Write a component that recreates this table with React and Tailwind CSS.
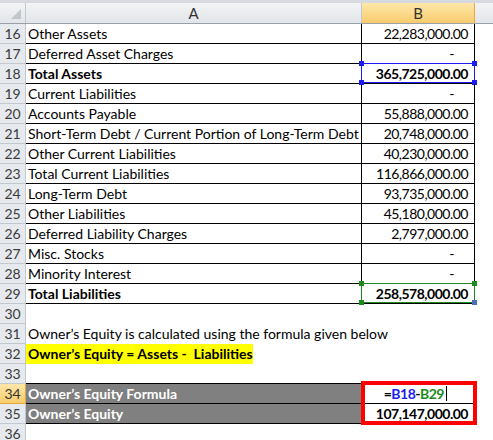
const rows = [
  { n: 16, a: "Other Assets", b: "22,283,000.00", grid: true },
  { n: 17, a: "Deferred Asset Charges", b: "-", grid: true },
  { n: 18, a: "Total Assets", b: "365,725,000.00", grid: true, bold: true, ref: "blue" },
  { n: 19, a: "Current Liabilities", b: "-", grid: true },
  { n: 20, a: "Accounts Payable", b: "55,888,000.00", grid: true },
  { n: 21, a: "Short-Term Debt / Current Portion of Long-Term Debt", b: "20,748,000.00", grid: true },
  { n: 22, a: "Other Current Liabilities", b: "40,230,000.00", grid: true },
  { n: 23, a: "Total Current Liabilities", b: "116,866,000.00", grid: true },
  { n: 24, a: "Long-Term Debt", b: "93,735,000.00", grid: true },
  { n: 25, a: "Other Liabilities", b: "45,180,000.00", grid: true },
  { n: 26, a: "Deferred Liability Charges", b: "2,797,000.00", grid: true },
  { n: 27, a: "Misc. Stocks", b: "-", grid: true },
  { n: 28, a: "Minority Interest", b: "-", grid: true },
  { n: 29, a: "Total Liabilities", b: "258,578,000.00", grid: true, bold: true, ref: "green" },
  { n: 30 },
  { n: 31, a: "Owner’s Equity is calculated using the formula given below" },
  { n: 32, a: "Owner’s Equity = Assets -  Liabilities", bold: true, yellow: true },
  { n: 33, bottom: true },
  { n: 34, a: "Owner’s Equity Formula", dark: true, bold: true, formula: true },
  { n: 35, a: "Owner’s Equity", b: "107,147,000.00", dark: true, bold: true },
  { n: 36 },
];

function RefBox({ color }) {
  const line = color === "blue" ? "border-[#1c1cf0]" : "border-[#1d8a1d]";
  const dot = color === "blue" ? "bg-[#1c1cf0]" : "bg-[#1d8a1d]";
  return (
    <div className={`absolute left-[-1px] top-[-1px] w-[114px] h-[20px] border ${line}`}>
      <span className={`absolute -left-[3px] -top-[3px] w-[5px] h-[5px] ${dot}`} />
      <span className={`absolute -right-[3px] -top-[3px] w-[5px] h-[5px] ${dot}`} />
      <span className={`absolute -left-[3px] -bottom-[3px] w-[5px] h-[5px] ${dot}`} />
      <span className={`absolute -right-[3px] -bottom-[3px] w-[5px] h-[5px] ${color === "green" ? "bg-[#4a6fb5]" : dot}`} />
    </div>
  );
}

function Row({ r }) {
  const active = r.n === 34;
  const border = r.grid || r.dark ? "border-r border-b border-black" : r.bottom ? "border-b border-black" : "";
  const isDash = r.b === "-";
  return (
    <div className="flex h-[20px]">
      <div
        className={`w-[26px] shrink-0 border-r border-b flex items-center justify-center text-[14px] ${
          active
            ? "bg-gradient-to-b from-[#fde7a9] to-[#f8cc6c] border-[#e5a93e] text-[#333]"
            : "bg-[#e6e9ee] border-[#c3c8ce] text-[#3b3b3b]"
        }`}
      >
        {r.n}
      </div>
      <div
        className={`w-[336px] shrink-0 h-full flex items-center pl-[2px] whitespace-pre ${border} ${
          r.dark ? "bg-[#808080] text-white" : "text-black"
        } ${r.bold ? "font-bold" : ""} ${r.grid ? "overflow-hidden" : ""}`}
      >
        {r.yellow ? (
          <span className="bg-[#ffff00] h-[20px] -ml-[2px] pl-[2px] w-[227px] flex items-center">{r.a}</span>
        ) : (
          r.a
        )}
      </div>
      <div
        className={`relative w-[113px] shrink-0 h-full flex items-center justify-end whitespace-nowrap tracking-[-0.5px] ${border} ${
          isDash ? "pr-[20px]" : r.formula ? "pr-[27px]" : "pr-[6px]"
        } ${r.bold ? "font-bold" : ""}`}
      >
        {r.formula ? (
          <>
            <span>=</span>
            <span className="text-[#1c1cf0]">B18</span>
            <span>-</span>
            <span className="text-[#1d8a1d]">B29</span>
            <span className="ml-[2px] w-px h-[15px] bg-black" />
            <div className="absolute left-[-1px] top-[-3px] w-[116px] h-[44px] border-[4px] border-[#ff0000] z-10" />
          </>
        ) : (
          r.b
        )}
        {r.ref && <RefBox color={r.ref} />}
      </div>
      <div className="flex-1" />
    </div>
  );
}

export default function App() {
  return (
    <div
      className="w-[493px] h-[440px] overflow-hidden bg-white text-[14px] leading-none"
      style={{ fontFamily: "Lato, 'Liberation Sans', sans-serif" }}
    >
      <div className="h-[3px] bg-[#d6dae0]" />
      <div className="flex h-[21px] border-b border-[#9aa0a8]">
        <div className="w-[26px] shrink-0 border-r border-[#c3c8ce] bg-gradient-to-b from-[#f2f4f6] to-[#e2e5e9] relative">
          <svg className="absolute left-[11px] top-[6px]" width="10" height="10" viewBox="0 0 10 10">
            <polygon points="10,0 10,10 0,10" fill="#c2c6cc" />
          </svg>
        </div>
        <div className="w-[336px] shrink-0 border-r border-[#c3c8ce] bg-gradient-to-b from-[#f2f4f6] to-[#e2e5e9] flex items-center justify-center text-[15px] text-[#333]">
          A
        </div>
        <div className="w-[113px] shrink-0 border-r border-[#e5a93e] bg-gradient-to-b from-[#fde7a9] to-[#f8cc6c] flex items-center justify-center text-[15px] text-[#333]">
          B
        </div>
        <div className="flex-1 bg-gradient-to-b from-[#f2f4f6] to-[#e2e5e9]" />
      </div>
      {rows.map((r) => (
        <Row key={r.n} r={r} />
      ))}
    </div>
  );
}
